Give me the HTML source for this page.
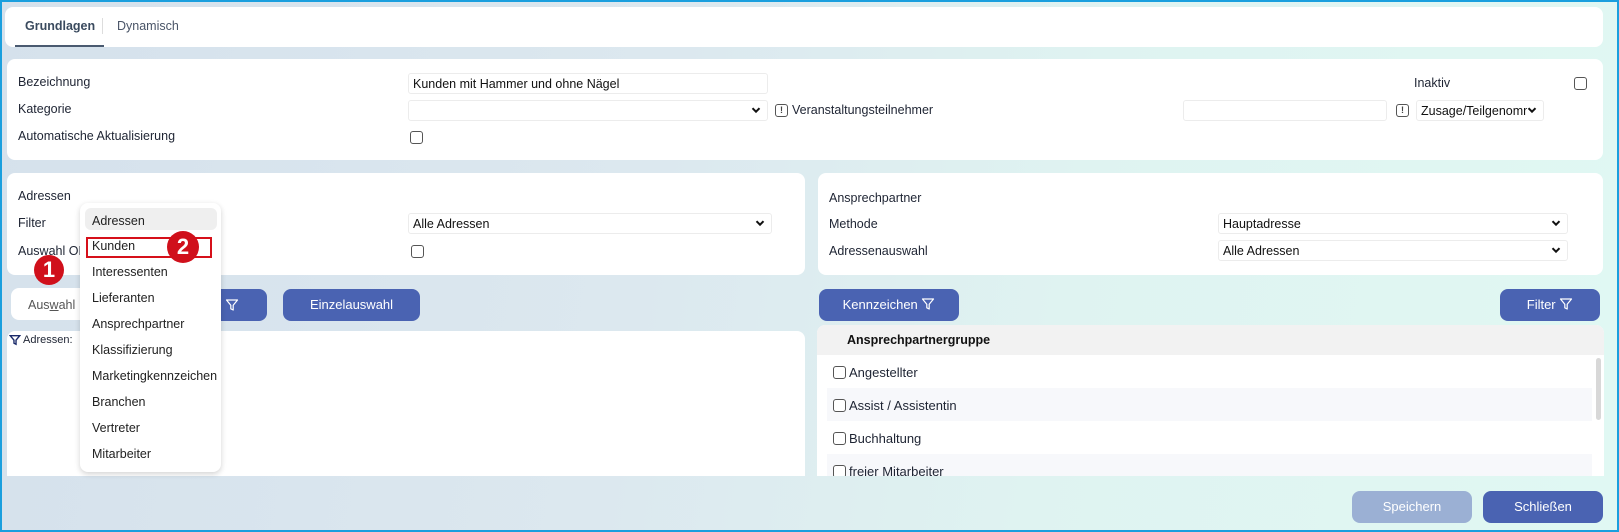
<!DOCTYPE html>
<html><head><meta charset="utf-8"><style>
*{box-sizing:border-box;margin:0;padding:0}
body{width:1619px;height:532px;overflow:hidden;font-family:"Liberation Sans",Arial,sans-serif;font-size:12.5px;color:#1e2433;position:relative;
background:linear-gradient(100deg,#d5e1ec 0%,#dce8ef 40%,#dff3f1 65%,#e0f8f3 100%);}
.frame{position:absolute;left:0;top:0;width:1619px;height:532px;border:2px solid #1a9fde;border-top:2px solid #1a9fde;pointer-events:none}
.card{position:absolute;background:#fff;border-radius:8px}
.t{position:absolute;white-space:nowrap}
.inp{position:absolute;background:#fff;border:1px solid #ececec;border-radius:3px;height:21px;padding:3px 4px;font-size:12.5px;color:#111}
.chev{position:absolute;right:6px;top:4px;width:10px;height:10px}
.cb{position:absolute;width:13px;height:13px;border:1px solid #555;border-radius:3px;background:#fff}
.ex{position:absolute;width:13px;height:13px;border:1.5px solid #555;border-radius:3px;font-size:9px;font-weight:bold;text-align:center;line-height:10px;color:#444}
.btn{position:absolute;background:#4a63b2;color:#fff;border-radius:8px;text-align:center;line-height:32px;font-size:13px;height:32px}
.dd{position:absolute;left:80px;top:203px;width:141px;height:269px;background:#fff;border-radius:8px;box-shadow:0 2px 6px rgba(0,0,0,.18)}
.it{position:absolute;left:12px;font-size:12.5px;color:#222}
.badge{position:absolute;border-radius:50%;background:#d0101b;color:#fff;font-weight:bold;text-align:center;font-size:22px}
</style></head><body>
<svg width="0" height="0" style="position:absolute"><defs>
<symbol id="chv" viewBox="0 0 10 10"><path d="M1.5 3.2 L5 6.7 L8.5 3.2" fill="none" stroke="#111" stroke-width="2"/></symbol>
<symbol id="fun" viewBox="0 0 14 14"><path d="M1.5 2 H12.5 L8.2 7.2 V12 L5.8 10.8 V7.2 Z" fill="none" stroke="#fff" stroke-width="1.2" stroke-linejoin="round"/></symbol>
</defs></svg>

<!-- tabs -->
<div class="card" style="left:5px;top:7px;width:1598px;height:40px"></div>
<div class="t" style="left:25px;top:19px;font-weight:bold;color:#3a4a5e">Grundlagen</div>
<div style="position:absolute;left:102px;top:18px;width:1px;height:16px;background:#ddd"></div>
<div class="t" style="left:117px;top:19px;color:#4a5568">Dynamisch</div>
<div style="position:absolute;left:15px;top:45px;width:89px;height:2px;background:#4a5a70"></div>

<!-- card 2 -->
<div class="card" style="left:7px;top:59px;width:1596px;height:101px"></div>
<div class="t" style="left:18px;top:75px">Bezeichnung</div>
<div class="t" style="left:18px;top:102px">Kategorie</div>
<div class="t" style="left:18px;top:129px">Automatische Aktualisierung</div>
<div class="inp" style="left:408px;top:73px;width:360px">Kunden mit Hammer und ohne Nägel</div>
<div class="inp" style="left:408px;top:100px;width:360px"><svg class="chev"><use href="#chv"/></svg></div>
<div class="cb" style="left:410px;top:131px"></div>
<div class="ex" style="left:775px;top:104px">!</div>
<div class="t" style="left:792px;top:103px">Veranstaltungsteilnehmer</div>
<div class="t" style="left:1414px;top:76px">Inaktiv</div>
<div class="cb" style="left:1574px;top:77px"></div>
<div class="inp" style="left:1183px;top:100px;width:204px"></div>
<div class="ex" style="left:1396px;top:104px">!</div>
<div class="inp" style="left:1416px;top:100px;width:128px;overflow:hidden">Zusage/Teilgenomm<svg class="chev" style="background:#fff"><use href="#chv"/></svg></div>

<!-- Adressen card -->
<div class="card" style="left:7px;top:173px;width:798px;height:102px"></div>
<div class="t" style="left:18px;top:189px">Adressen</div>
<div class="t" style="left:18px;top:216px">Filter</div>
<div class="t" style="left:18px;top:244px">Auswahl ODER</div>
<div class="inp" style="left:408px;top:213px;width:364px">Alle Adressen<svg class="chev"><use href="#chv"/></svg></div>
<div class="cb" style="left:411px;top:245px"></div>

<!-- Ansprechpartner card -->
<div class="card" style="left:818px;top:173px;width:785px;height:102px"></div>
<div class="t" style="left:829px;top:191px">Ansprechpartner</div>
<div class="t" style="left:829px;top:217px">Methode</div>
<div class="t" style="left:829px;top:244px">Adressenauswahl</div>
<div class="inp" style="left:1218px;top:213px;width:350px">Hauptadresse<svg class="chev"><use href="#chv"/></svg></div>
<div class="inp" style="left:1218px;top:240px;width:350px">Alle Adressen<svg class="chev"><use href="#chv"/></svg></div>

<!-- toolbar left -->
<div class="card" style="left:11px;top:288px;width:190px;height:32px"></div>
<div class="t" style="left:28px;top:298px;color:#555">Aus<u>w</u>ahl</div>
<div class="btn" style="left:200px;top:289px;width:67px"><svg width="14" height="14" style="position:absolute;left:25px;top:9px"><use href="#fun"/></svg></div>
<div class="btn" style="left:283px;top:289px;width:137px">Einzelauswahl</div>

<!-- left lower panel -->
<div class="card" style="left:7px;top:331px;width:798px;height:145px;border-radius:8px 8px 0 0"></div>
<svg width="12" height="12" style="position:absolute;left:9px;top:334px" viewBox="0 0 14 14"><path d="M1.5 2 H12.5 L8.2 7.2 V12 L5.8 10.8 V7.2 Z" fill="none" stroke="#1a2a6a" stroke-width="1.6"/></svg>
<div class="t" style="left:23px;top:334px;font-size:11px">Adressen:</div>

<!-- right toolbar -->
<div class="btn" style="left:819px;top:289px;width:140px">Kennzeichen <svg width="14" height="14" style="vertical-align:-2px"><use href="#fun"/></svg></div>
<div class="btn" style="left:1500px;top:289px;width:100px">Filter <svg width="14" height="14" style="vertical-align:-2px"><use href="#fun"/></svg></div>

<!-- right table -->
<div class="card" style="left:817px;top:325px;width:787px;height:151px;border-radius:8px 8px 0 0;overflow:hidden">
 <div style="position:absolute;left:0;top:0;width:787px;height:30px;background:#f2f2f2"></div>
 <div class="t" style="left:30px;top:8px;font-weight:bold;color:#111">Ansprechpartnergruppe</div>
 <div style="position:absolute;left:10px;top:63px;width:765px;height:33px;background:#f7f8fb"></div>
 <div style="position:absolute;left:10px;top:129px;width:765px;height:33px;background:#f7f8fb"></div>
 <div style="position:absolute;left:779px;top:33px;width:5px;height:62px;border-radius:3px;background:#d8d8d8"></div>
 <div class="cb" style="left:16px;top:41px"></div><div class="t" style="left:32px;top:40px;font-size:13px">Angestellter</div>
 <div class="cb" style="left:16px;top:74px"></div><div class="t" style="left:32px;top:73px;font-size:13px">Assist / Assistentin</div>
 <div class="cb" style="left:16px;top:107px"></div><div class="t" style="left:32px;top:106px;font-size:13px">Buchhaltung</div>
 <div class="cb" style="left:16px;top:140px"></div><div class="t" style="left:32px;top:139px;font-size:13px">freier Mitarbeiter</div>
</div>

<!-- bottom buttons -->
<div class="btn" style="left:1352px;top:491px;width:120px;background:#9bb0d4">Speichern</div>
<div class="btn" style="left:1483px;top:491px;width:120px">Schließen</div>

<!-- dropdown -->
<div class="dd">
 <div style="position:absolute;left:5px;top:5px;width:132px;height:22px;background:#efefef;border-radius:6px"></div>
 <div class="it" style="top:11px">Adressen</div>
 <div style="position:absolute;left:6px;top:34px;width:126px;height:21px;border:2px solid #d6101a"></div>
 <div class="it" style="top:36px">Kunden</div>
 <div class="it" style="top:62px">Interessenten</div>
 <div class="it" style="top:88px">Lieferanten</div>
 <div class="it" style="top:114px">Ansprechpartner</div>
 <div class="it" style="top:140px">Klassifizierung</div>
 <div class="it" style="top:166px">Marketingkennzeichen</div>
 <div class="it" style="top:192px">Branchen</div>
 <div class="it" style="top:218px">Vertreter</div>
 <div class="it" style="top:244px">Mitarbeiter</div>
</div>
<div class="badge" style="left:167px;top:231px;width:32px;height:32px;line-height:32px">2</div>
<div class="badge" style="left:34px;top:255px;width:30px;height:30px;line-height:30px">1</div>

<div class="frame"></div>
</body></html>
